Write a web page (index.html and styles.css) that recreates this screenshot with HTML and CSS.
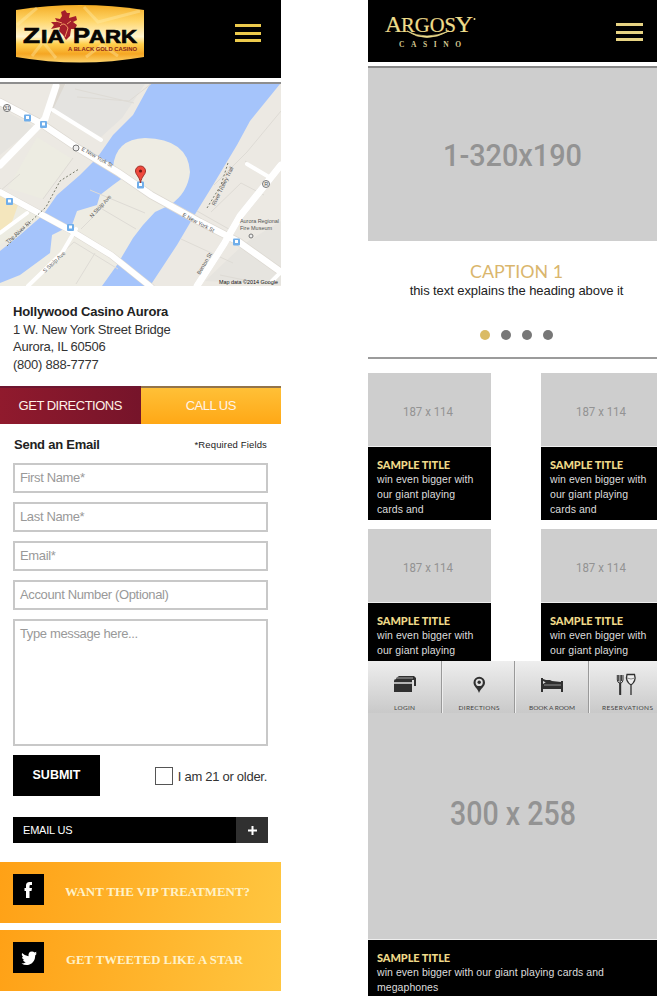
FILE: index.html
```html
<!DOCTYPE html>
<html lang="en">
<head>
<meta charset="utf-8">
<title>Casino mobile screens</title>
<link rel="stylesheet" href="styles.css">
</head>
<body>
<main class="screens">
<section class="phone zia">
  <header class="bar zia-bar">
    <svg class="zia-logo" width="128" height="58" viewBox="16 5 128 58">
      <defs><linearGradient id="gold" x1="0" y1="0" x2="0" y2="1"><stop offset="0" stop-color="#f4ad25"/><stop offset=".28" stop-color="#ffd66a"/><stop offset=".55" stop-color="#fff4d0"/><stop offset=".68" stop-color="#ffcf4c"/><stop offset=".85" stop-color="#f5a623"/><stop offset="1" stop-color="#fcd36c"/></linearGradient></defs>
      <path d="M16 10Q80 0 144 10V57Q80 68 16 57Z" fill="url(#gold)"/>
      <path d="M17 25L37 8M32 56L43 42L56 58M84 7L98 22L140 11M86 57L102 45L118 56" stroke="#fff0b5" stroke-width="3" opacity=".35" fill="none"/>
      <path d="M61 12L65 10L67 13L70 13L69 18L76 16L77 20L73 22L77 25L75 29L71 29L70 36L66 40L63 35L59 31L60 27L51 29L54 25L51 22L57 22L55 18L60 19L62 16Z" fill="#a51f2a"/>
      <path d="M60 26Q64 21 68 28L65 37M56 21L62 23M71 21L67 24" stroke="#ef9a61" fill="none"/>
      <g class="zia-name"><text x="23" y="43" font-size="22" textLength="17" lengthAdjust="spacingAndGlyphs">Z</text><text x="41" y="43" font-size="18" textLength="23" lengthAdjust="spacingAndGlyphs">IA</text><text x="73" y="43" font-size="22" textLength="17" lengthAdjust="spacingAndGlyphs">P</text><text x="89" y="43" font-size="18" textLength="48" lengthAdjust="spacingAndGlyphs">ARK</text></g>
      <text class="zia-tag" x="68" y="51" textLength="69" lengthAdjust="spacingAndGlyphs">A BLACK GOLD CASINO</text>
    </svg>
    <div class="burger"><i></i><i></i><i></i></div>
  </header>
  <svg class="map" width="281" height="202" viewBox="0 84 281 202">
    <path fill="#ece9e3" d="M0 84H281V286H0Z"/>
    <path fill="#e4e3e0" d="M66 84H145L122 118L101 137L50 108Z"/>
    <path fill="#edece2" d="M37 137L72 159L43 199L8 188ZM0 192L43 215L0 245Z"/>
    <path fill="#f4e6bd" d="M0 196L18 205L12 222L0 231Z"/>
    <path fill="#e6e4df" d="M0 108L35 127L0 155ZM245 243L281 221V285L205 281Z"/>
    <path fill="#a5c4fb" d="M150 84H280L250 121L237 145L213 185L197 211L177 245L150 286H0V251L20 235L43 215L57 195L80 175L97 158L113 135L133 115Z"/>
    <path fill="#eeece3" d="M113 185L124 177L113 168Q115 139 145 138Q188 139 190 172Q188 193 170 205L155 212L143 225L133 238L117 265L102 286H0V283L20 275L50 253L52 235L72 225L77 211L97 205L100 195Z"/>
    <g fill="none" stroke="#dedbd5"><path d="M77 97L129 101L151 84M75 89L134 103M43 199L73 158M0 191L20 174M90 190L145 213M97 206L136 229M81 229L105 205M40 273L74 242L118 269M76 284L95 253M214 185L247 152L281 111M211 212L241 183L264 195M197 211L234 232M181 239L233 263M220 275L249 281M245 161L268 177"/></g>
    <g fill="none" stroke="#ddd9d2" stroke-linecap="round"><path stroke-width="8" d="M0 102L42 124L76 147L119 173L151 195L200 222L239 242L281 272"/><path stroke-width="7" d="M0 192L70 230L111 255L151 287M281 165L261 190L240 216L224 244L197 286"/><path stroke-width="6" d="M62 84L45 119L0 165"/></g>
    <g fill="none" stroke="#fff" stroke-linecap="round"><path stroke-width="6.500" d="M0 102L42 124L76 147L119 173L151 195L200 222L239 242L281 272"/><path stroke-width="6" d="M0 192L70 230L111 255L151 287"/><path stroke-width="7" d="M281 165L261 190L240 216L224 244L197 286M56 86L45 119L0 165"/><path stroke-width="4" d="M53 110L101 140M0 233L27 213M28 286L62 253L76 229M272 281L281 272M247 164L269 177"/></g>
    <path d="M7 246L28 224L46 207L60 181L79 169M207 208L221 185L228 163" fill="none" stroke="#777a69" stroke-dasharray="2 2"/>
    <g class="map-text"><text transform="translate(81 150) rotate(30)">E New York St</text><text transform="translate(182 216) rotate(28)">E New York St</text><text transform="translate(8 244) rotate(-42)">The River St</text><text transform="translate(92 218) rotate(-47)">N Stolp Ave</text><text transform="translate(45 273) rotate(-43)">S Stolp Ave</text><text transform="translate(215 206) rotate(-64)">River Trolley Trail</text><text transform="translate(200 275) rotate(-60)">Benton St</text></g>
    <g fill="#eee" stroke="#777"><circle cx="7" cy="108" r="3.600"/><circle cx="76" cy="148" r="3"/><circle cx="266" cy="184" r="3.500"/><circle cx="251" cy="236" r="2"/></g>
    <g class="map-text"><text x="4" y="110">31</text><text x="264.200" y="186">R</text><text x="240" y="223" textLength="39">Aurora Regional</text><text x="240" y="230">Fire Museum</text></g>
    <g fill="#70aeea"><rect x="24" y="114.500" width="7" height="7" rx="1"/><rect x="40" y="121" width="7" height="7" rx="1"/><rect x="137" y="181.500" width="7" height="7" rx="1"/><rect x="6" y="198" width="7" height="7" rx="1"/><rect x="67" y="224" width="7" height="7" rx="1"/><rect x="233" y="238.500" width="7" height="7" rx="1"/></g>
    <g fill="#fff"><rect x="26" y="116" width="3" height="3"/><rect x="42" y="122.500" width="3" height="3"/><rect x="139" y="183" width="3" height="3"/><rect x="8" y="199.500" width="3" height="3"/><rect x="69" y="225.500" width="3" height="3"/><rect x="235" y="240" width="3" height="3"/></g>
    <path d="M140.500 183C139.500 176 135.500 175 135.500 171A5 5 0 0 1 145.500 171C145.500 175 141.500 176 140.500 183Z" fill="#ef493d" stroke="#9e3028"/><circle cx="140.500" cy="171" r="1.600" fill="#701915"/>
    <text class="map-credit" x="219" y="284.200" textLength="59" lengthAdjust="spacingAndGlyphs">Map data ©2014 Google</text>
  </svg>
  <address class="address"><strong>Hollywood Casino Aurora</strong><span>1 W. New York Street Bridge</span><span>Aurora, IL 60506</span><span>(800) 888-7777</span></address>
  <nav class="actions"><a class="directions">GET DIRECTIONS</a><a class="call">CALL US</a></nav>
  <form class="contact">
    <div class="form-head"><strong>Send an Email</strong><small>*Required Fields</small></div>
    <div class="field">First Name*</div><div class="field">Last Name*</div><div class="field">Email*</div><div class="field">Account Number (Optional)</div><div class="field message">Type message here...</div>
    <div class="submit-row"><div class="submit">SUBMIT</div><div class="check"><i></i><span>I am 21 or older.</span></div></div>
    <div class="email"><span>EMAIL US</span><b><svg width="11" height="11"><path d="M5.500 1V10M1 5.500H10" stroke="#fff" stroke-width="2"/></svg></b></div>
  </form>
  <div class="promo"><i class="social"><svg width="31" height="31"><path d="M19 8V11H17.500Q16.500 11 16.500 12V14H19L18.500 17H16.500V24H13V17H11.500V14H13V11.500Q13 8 16.500 8Z" fill="#fff"/></svg></i><svg class="promo-text" width="190" height="20"><text x="0" y="13.500" textLength="185" lengthAdjust="spacingAndGlyphs">WANT THE VIP TREATMENT?</text></svg></div>
  <div class="promo"><i class="social"><svg width="31" height="31" viewBox="0 0 31 31"><path d="M9 11Q12 14 15.500 14.200Q15 9.500 19 9.500Q20.500 9.500 21.500 10.600L23.500 9.800L22.700 11.700L24 11.500L22.300 13.300Q22 20.500 16.500 22.500Q12.500 24 8.500 21.500Q11 21.500 12.700 20.200Q10.500 20 10 18H11.200Q9 17 9 14.800L10.200 15.200Q8 13.500 9 11Z" fill="#fff"/></svg></i><svg class="promo-text" width="190" height="20"><text x="1" y="13.500" textLength="177" lengthAdjust="spacingAndGlyphs">GET TWEETED LIKE A STAR</text></svg></div>
</section>

<section class="phone argosy">
  <header class="bar argosy-bar">
    <svg class="argosy-logo" width="96" height="38" viewBox="384 11 96 38"><g class="argosy-name"><text x="385" y="32" font-size="23" textLength="17" lengthAdjust="spacingAndGlyphs">A</text><text x="401" y="32" font-size="20" textLength="55" lengthAdjust="spacingAndGlyphs">RGOS</text><text x="455" y="32" font-size="23" textLength="18" lengthAdjust="spacingAndGlyphs">Y</text></g><path d="M407 31Q426 44 449 31Q426 41 407 31Z" fill="#eedc8b" stroke="#eedc8b" stroke-width=".7"/><circle cx="474.500" cy="19" r="1" fill="#eedc8b"/><text class="argosy-sub" x="399" y="46.500" textLength="62">CASINO</text></svg>
    <div class="burger pale"><i></i><i></i><i></i></div>
  </header>
  <div class="hero"><svg width="289" height="173"><text class="dim" x="75" y="98" font-size="32" textLength="139" lengthAdjust="spacingAndGlyphs">1-320x190</text></svg></div>
  <div class="caption"><svg class="caption-title" width="289" height="20"><text x="102" y="16.500" textLength="93" lengthAdjust="spacingAndGlyphs">CAPTION 1</text></svg><p>this text explains the heading above it</p><div class="dots"><i class="on"></i><i></i><i></i><i></i></div></div>
  <div class="cards">
    <article class="card"><div class="thumb"><svg width="123" height="73"><text class="dim small" x="35" y="43" textLength="50" lengthAdjust="spacingAndGlyphs">187 x 114</text></svg></div><div class="copy"><h3>SAMPLE TITLE</h3><p>win even bigger with<br>our giant playing<br>cards and</p></div></article>
    <article class="card"><div class="thumb"><svg width="123" height="73"><text class="dim small" x="35" y="43" textLength="50" lengthAdjust="spacingAndGlyphs">187 x 114</text></svg></div><div class="copy"><h3>SAMPLE TITLE</h3><p>win even bigger with<br>our giant playing<br>cards and</p></div></article>
    <article class="card short"><div class="thumb"><svg width="123" height="73"><text class="dim small" x="35" y="43" textLength="50" lengthAdjust="spacingAndGlyphs">187 x 114</text></svg></div><div class="copy"><h3>SAMPLE TITLE</h3><p>win even bigger with<br>our giant playing</p></div></article>
    <article class="card short"><div class="thumb"><svg width="123" height="73"><text class="dim small" x="35" y="43" textLength="50" lengthAdjust="spacingAndGlyphs">187 x 114</text></svg></div><div class="copy"><h3>SAMPLE TITLE</h3><p>win even bigger with<br>our giant playing</p></div></article>
  </div>
  <nav class="tabs">
    <a><svg width="73" height="52"><path d="M28 17L31 15H46L48 17V25H46V19H28ZM26 20Q26 18 28 18H43L44 19V21H26ZM26 23H44V31H26Z" fill="#303030"/><path d="M28 17H45" stroke="#ddd" stroke-width=".7"/><path d="M26 22H44" stroke="#888"/><text x="26" y="48.500" textLength="21">LOGIN</text></svg></a>
    <a><svg width="73" height="52"><path fill-rule="evenodd" d="M37 32C35.500 27 31.500 25.500 31.500 21.500A5.700 5.700 0 0 1 43 21.500C43 25.500 39 27 37 32ZM37.200 17.800A3.600 3.600 0 1 0 37.200 25A3.600 3.600 0 0 0 37.200 17.800Z" fill="#303030"/><circle cx="37.200" cy="21.300" r="1.700" fill="#303030"/><text x="16.500" y="48.500" textLength="41">DIRECTIONS</text></svg></a>
    <a><svg width="73" height="52"><path d="M26 17H28V18L31 19H35L37 20L46 21V20H48V31H46V28H28V31H26ZM28 20V23L31 21L34 23Z" fill="#303030"/><path d="M29 24H46" stroke="#bbb" stroke-width=".7"/><text x="14" y="48.500" textLength="46">BOOK A ROOM</text></svg></a>
    <a><svg width="73" height="52"><path d="M28.300 14V19Q28.300 21.500 31.200 22.500Q34 21.500 34 19V14M31.200 14V33M29.700 14V20M32.600 14V20" fill="none" stroke="#303030"/><path d="M31.200 22V34" stroke="#303030" stroke-width="2"/><path d="M38 13.500H45.500Q47.500 20 42 24V34V24Q36 20 38 13.500Z" fill="#eee" stroke="#303030" stroke-width="1.300"/><path d="M38 17L42 18L46 17" fill="none" stroke="#888"/><text x="13" y="48.500" textLength="51">RESERVATIONS</text></svg></a>
  </nav>
  <div class="feature"><svg width="289" height="225"><text class="dim strong" x="82" y="112" font-size="33" textLength="126" lengthAdjust="spacingAndGlyphs">300 x 258</text></svg></div>
  <div class="copy bottom-copy"><h3>SAMPLE TITLE</h3><p>win even bigger with our giant playing cards and<br>megaphones</p></div>
</section>
</main>
</body>
</html>
```
FILE: styles.css
```css
* { box-sizing: border-box; }
body { margin: 0; background: #fff; font-family: "Liberation Sans", Arial, sans-serif; color: #222; }
svg { display: block; }
i { font-style: normal; }
p, h3 { margin: 0; }
.screens { display: flex; gap: 87px; width: 657px; height: 996px; overflow: hidden; }
.phone { flex: none; height: 996px; overflow: hidden; }
.zia { width: 281px; }
.argosy { width: 289px; }
.bar { display: flex; justify-content: space-between; background: #000; }
.zia-bar { height: 78px; padding: 5px 20px 0 16px; }
.zia-name { font-family: "Liberation Sans", sans-serif; font-weight: bold; fill: #090604; stroke: #090604; stroke-width: .7px; }
.zia-tag { font-size: 6px; font-weight: bold; fill: #891f18; }
.burger { width: 26px; height: 18px; margin-top: 19px; display: flex; flex-direction: column; justify-content: space-between; }
.burger i { height: 3px; background: #ecca4c; }
.burger.pale { width: 27px; margin-top: 12px; margin-right: 1px; }
.burger.pale i { background: #e7d383; }
.map { margin-top: 4px; border-top: 2px solid #8e8e8e; height: 204px; }
.map-text { font-size: 5.500px; fill: #555; }
.map-credit { font-size: 6px; fill: #111; }
.address { display: flex; flex-direction: column; height: 100px; padding: 17px 13px 0; font-style: normal; font-size: 13px; line-height: 17.700px; }
.address strong { letter-spacing: -.14px; }
.address span { letter-spacing: -.24px; color: #333; }
.actions { display: flex; height: 38px; border-top: 2px solid #93744a; }
.actions a { width: 140.500px; text-align: center; color: #fff3e8; font-size: 13px; line-height: 35px; letter-spacing: -.5px; }
.directions { background: linear-gradient(90deg, #901a2d, #76142a); box-shadow: 0 -2px #6e1630; }
.call { background: linear-gradient(#ffc037, #ffa816); }
.contact { padding: 13px 13px 0; }
.form-head { display: flex; justify-content: space-between; height: 26px; padding: 0 1px 0 1px; font-size: 13px; line-height: 16px; }
.form-head strong { letter-spacing: -.24px; }
.form-head small { font-size: 9.500px; letter-spacing: .14px; }
.field { width: 255px; height: 30px; margin-bottom: 9px; border: 2px solid #c8c8c8; padding: 0 5px; line-height: 26px; font-size: 13px; letter-spacing: -.36px; color: #999; }
.message { height: 127px; margin-bottom: 9px; }
.submit-row { display: flex; justify-content: space-between; height: 62px; padding-right: 1px; }
.submit { width: 87px; height: 41px; background: #000; color: #fff; font-weight: bold; font-size: 12.500px; line-height: 41px; text-align: center; }
.check { display: flex; align-items: center; gap: 5px; height: 42px; font-size: 13px; letter-spacing: -.28px; color: #333; }
.check i { width: 18px; height: 18px; border: 1px solid #555; }
.email { display: flex; justify-content: space-between; width: 255px; height: 26px; padding-left: 10px; background: #000; color: #fff; font-size: 11px; line-height: 26px; letter-spacing: -.2px; }
.email b { display: grid; place-items: center; width: 32px; background: #303030; }
.promo { display: flex; align-items: flex-start; gap: 21px; height: 61px; margin-bottom: 7px; padding: 12px 13px; background: linear-gradient(100deg, #ffa116, #ffc640); }
.contact + .promo { margin-top: 19px; }
.social { width: 31px; height: 31px; background: #000; }
.promo-text { margin-top: 8px; font: bold 12px "Liberation Serif", serif; fill: #fff2c8; }

.argosy-bar { height: 62px; padding: 11px 13px 0 16px; }
.argosy-name { font-family: "Liberation Serif", serif; fill: #eedc8b; stroke: #eedc8b; stroke-width: .2px; }
.argosy-sub { font: bold 7.500px "Liberation Serif", serif; fill: #d6ca93; }
.hero { height: 175px; margin-top: 4px; border-top: 2px solid #888; background: #cecece; }
.dim { font-family: Roboto, sans-serif; font-weight: 500; fill: #939393; }
.small { font-size: 13px; font-weight: 400; }
.caption { height: 118px; padding-top: 20px; border-bottom: 2px solid #9b9b9b; text-align: center; }
.caption-title { font: 18px Lato, sans-serif; fill: #dab66d; }
.caption p { margin-top: 1px; padding-left: 8px; font-size: 13px; line-height: 17px; letter-spacing: -.08px; color: #222; }
.dots { display: flex; justify-content: center; gap: 11px; padding-left: 7px; margin-top: 31px; }
.dots i { width: 10px; height: 10px; border-radius: 50%; background: #777; }
.dots .on { background: #dabb64; }
.cards { display: grid; grid-template-columns: 123px 123px; gap: 9px 50px; width: 296px; margin-top: 14px; }
.card { height: 147px; background: #000; }
.card.short { height: 132px; }
.thumb { height: 74px; background: #cecece; border-bottom: 1px solid #eee; }
.copy { padding: 11px 0 0 9px; color: #ddd; background: #000; }
.copy h3 { height: 14px; font: 900 11px/14px Lato, sans-serif; letter-spacing: -.08px; color: #efd989; }
.copy p { font-size: 10.500px; line-height: 15px; letter-spacing: .06px; }
.tabs { display: flex; width: 296px; height: 52px; background: linear-gradient(#eee, #c9c9c9); }
.tabs a { flex: none; width: 73.700px; border-right: 1px solid #999; box-shadow: 1px 0 #eee; }
.tabs text { font: 6.500px Lato, sans-serif; fill: #444; }
.feature { height: 227px; background: #cecece; border-bottom: 1px solid #eee; }
.bottom-copy { height: 56px; }
```
